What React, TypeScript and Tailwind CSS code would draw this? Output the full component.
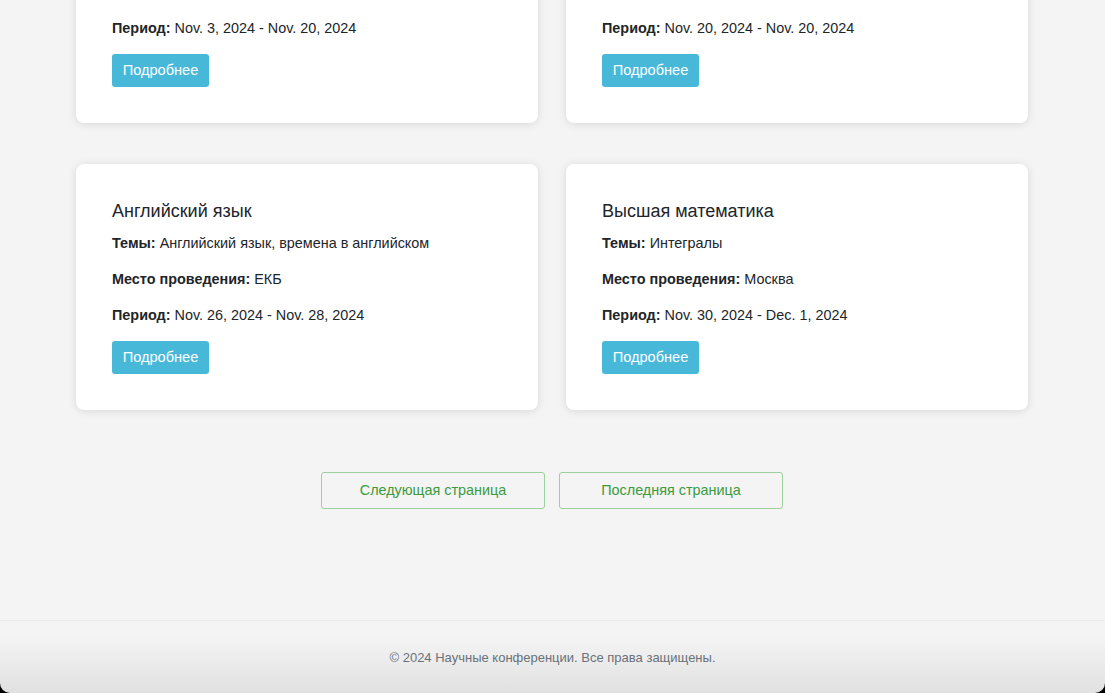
const conferences = [
  {
    title: 'Биология клетки',
    topics: 'Клеточная биология',
    place: 'Уфа',
    period: 'Nov. 3, 2024 - Nov. 20, 2024',
  },
  {
    title: 'Физика твердого тела',
    topics: 'Кристаллы',
    place: 'Москва',
    period: 'Nov. 20, 2024 - Nov. 20, 2024',
  },
  {
    title: 'Английский язык',
    topics: 'Английский язык, времена в английском',
    place: 'ЕКБ',
    period: 'Nov. 26, 2024 - Nov. 28, 2024',
  },
  {
    title: 'Высшая математика',
    topics: 'Интегралы',
    place: 'Москва',
    period: 'Nov. 30, 2024 - Dec. 1, 2024',
  },
];

const font = { fontFamily: '"Liberation Sans", Arial, Helvetica, sans-serif' };

export default function App() {
  return (
    <div className="relative h-screen overflow-hidden bg-black" style={font}>
      <div className="relative h-full overflow-hidden rounded-b-[10px] bg-[#f4f4f4] text-[#212529]">
        <main className="ml-[76px] -mt-[123px] w-[952px]">
          {/* Conference cards */}
          <div className="grid grid-cols-2 gap-x-[28px] gap-y-[41px]">
            {conferences.map((c, i) => (
              <div
                key={i}
                className="rounded-lg bg-white px-[36px] pt-[36px] pb-[36px] shadow-[0_1px_8px_rgba(0,0,0,0.12)]"
              >
                <h3 className="text-[18px] leading-[22px] font-normal">{c.title}</h3>
                <p className="mt-[11px] text-[14.4px] leading-[20px]">
                  <strong className="font-bold">Темы:</strong> {c.topics}
                </p>
                <p className="mt-[16px] text-[14.4px] leading-[20px]">
                  <strong className="font-bold">Место проведения:</strong> {c.place}
                </p>
                <p className="mt-[16px] text-[14.4px] leading-[20px]">
                  <strong className="font-bold">Период:</strong> {c.period}
                </p>
                <button className="mt-[16px] h-[33px] w-[97px] rounded-[3px] bg-[#48b8d9] text-[14.6px] text-white">
                  Подробнее
                </button>
              </div>
            ))}
          </div>

          {/* Pagination */}
          <div className="mt-[62px] flex justify-center gap-[14px]">
            <button className="h-[37px] w-[224px] rounded-[3px] border border-[#9dd09d] text-[14.4px] text-[#3b9a3e]">
              Следующая страница
            </button>
            <button className="h-[37px] w-[224px] rounded-[3px] border border-[#9dd09d] text-[14.4px] text-[#3b9a3e]">
              Последняя страница
            </button>
          </div>
        </main>

        {/* Footer */}
        <footer className="mt-[111px] border-t border-[#ececec] py-[28px] text-center">
          <p className="text-[13px] leading-[18px] text-[#6c757d]">
            © 2024 Научные конференции. Все права защищены.
          </p>
        </footer>

        <div className="pointer-events-none absolute inset-x-0 bottom-0 h-[56px] bg-linear-to-b from-transparent to-black/[0.08]" />
      </div>
    </div>
  );
}
